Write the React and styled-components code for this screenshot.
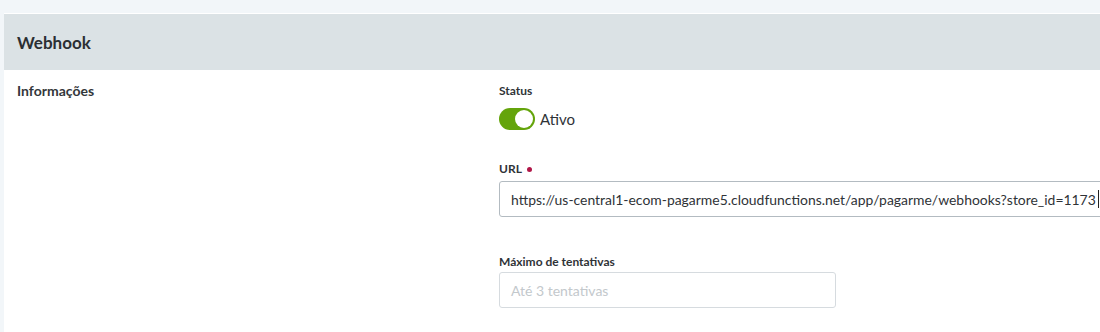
import React from "react";
import styled, { createGlobalStyle } from "styled-components";

const Global = createGlobalStyle`
  html, body { margin: 0; padding: 0; background: #f2f6f9; overflow: hidden; }
  body { font-family: Lato, "Open Sans", sans-serif; color: #2f3337; }
`;

const Page = styled.div`
  padding: 13px 0 0 4px;
`;

const Card = styled.section`
  background: #fff;
  border-top: 1px solid #fff;
  overflow: hidden;
`;

const CardHeader = styled.header`
  background: #dbe2e5;
  height: 56px;
  display: flex;
  align-items: center;
  padding: 0 13px;
`;

const Title = styled.h2`
  margin: 0;
  font-size: 17px;
  font-weight: 700;
  color: #2b2f33;
`;

const Body = styled.div`
  display: grid;
  grid-template-columns: 482px 1fr;
  padding: 11px 0 30px 13px;
`;

const SectionTitle = styled.h3`
  margin: 0;
  font-size: 14px;
  line-height: 20px;
  font-weight: 700;
  color: #33373b;
`;

const Fields = styled.div`
  display: flex;
  flex-direction: column;
  align-items: flex-start;
  padding-top: 2px;
  min-width: 0;
`;

const Field = styled.div`
  display: flex;
  flex-direction: column;
  margin-top: ${(p) => p.$top || 0}px;
`;

const Label = styled.label`
  font-size: 12px;
  line-height: 16px;
  font-weight: 700;
  color: #2f3337;
  margin-bottom: ${(p) => p.$gap || 4}px;
  display: flex;
  align-items: center;
`;

const Required = styled.span`
  width: 5px;
  height: 5px;
  border-radius: 50%;
  background: #b01648;
  margin-left: 5px;
`;

const SwitchRow = styled.div`
  display: flex;
  align-items: center;
  gap: 5px;
`;

const Track = styled.span`
  width: 36px;
  height: 22px;
  border-radius: 11px;
  background: #64a40b;
  display: flex;
  align-items: center;
  justify-content: flex-end;
  padding: 0 2px;
  box-sizing: border-box;
`;

const Knob = styled.span`
  width: 18px;
  height: 18px;
  border-radius: 50%;
  background: #fff;
`;

const SwitchText = styled.span`
  font-size: 15px;
  color: #2f3337;
`;

const Input = styled.div`
  box-sizing: border-box;
  height: 36px;
  width: ${(p) => p.$width};
  border: 1px solid ${(p) => (p.$strong ? "#b3bbc1" : "#d6dbdf")};
  border-radius: 3px;
  display: flex;
  align-items: center;
  padding: 0 11px;
  font-size: ${(p) => (p.$placeholder ? "14px" : "13.93px")};
  color: ${(p) => (p.$placeholder ? "#c3c8cc" : "#2f3337")};
  white-space: nowrap;
`;

const Caret = styled.span`
  display: inline-block;
  width: 1px;
  height: 18px;
  background: #222;
  margin-left: 2px;
`;

export default function App() {
  return (
    <>
      <Global />
      <Page>
        <Card>
          <CardHeader>
            <Title>Webhook</Title>
          </CardHeader>
          <Body>
            <SectionTitle>Informações</SectionTitle>
            <Fields>
              <Field>
                <Label $gap={9}>Status</Label>
                <SwitchRow>
                  <Track>
                    <Knob />
                  </Track>
                  <SwitchText>Ativo</SwitchText>
                </SwitchRow>
              </Field>
              <Field $top={31}>
                <Label $gap={4}>
                  URL <Required />
                </Label>
                <Input $strong $width="640px">
                  https://us-central1-ecom-pagarme5.cloudfunctions.net/app/pagarme/webhooks?store_id=1173
                  <Caret />
                </Input>
              </Field>
              <Field $top={37}>
                <Label $gap={2}>Máximo de tentativas</Label>
                <Input $placeholder $width="337px">
                  Até 3 tentativas
                </Input>
              </Field>
            </Fields>
          </Body>
        </Card>
      </Page>
    </>
  );
}
